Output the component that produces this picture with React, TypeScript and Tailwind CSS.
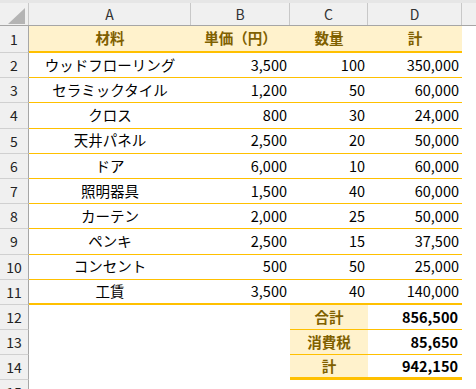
const rows = [
  { name: 'ウッドフローリング', price: '3,500', qty: '100', total: '350,000' },
  { name: 'セラミックタイル', price: '1,200', qty: '50', total: '60,000' },
  { name: 'クロス', price: '800', qty: '30', total: '24,000' },
  { name: '天井パネル', price: '2,500', qty: '20', total: '50,000' },
  { name: 'ドア', price: '6,000', qty: '10', total: '60,000' },
  { name: '照明器具', price: '1,500', qty: '40', total: '60,000' },
  { name: 'カーテン', price: '2,000', qty: '25', total: '50,000' },
  { name: 'ペンキ', price: '2,500', qty: '15', total: '37,500' },
  { name: 'コンセント', price: '500', qty: '50', total: '25,000' },
  { name: '工賃', price: '3,500', qty: '40', total: '140,000' },
];

const totals = [
  { label: '合計', value: '856,500' },
  { label: '消費税', value: '85,650' },
  { label: '計', value: '942,150' },
];

const grid = 'grid grid-cols-[29px_162px_99px_78px_94px_1fr]';
const rowHead =
  'flex items-center justify-center bg-[#f0f0f0] border-r border-r-[#a6a6a6] border-b border-b-[#d0d0d0] text-[14px] text-[#222]';

export default function App() {
  return (
    <div className="w-[476px] h-[389px] overflow-hidden bg-white font-['Noto_Sans_CJK_JP',sans-serif] text-[14.5px] text-black leading-none">
      {/* column headers */}
      <div className="h-[3px] bg-[#e6e6e6]" />
      <div className={`${grid} h-[23px] bg-[#f0f0f0] border-b border-b-[#a6a6a6] text-[14px] text-[#333]`}>
        <div className="relative border-r border-r-[#c8c8c8]">
          <div className="absolute left-[8px] top-[5px] w-0 h-0 border-l-[17px] border-l-transparent border-b-[16px] border-b-[#b4b4b4]" />
        </div>
        {['A', 'B', 'C', 'D'].map((c) => (
          <div key={c} className="flex items-center justify-center border-r border-r-[#c8c8c8]">
            {c}
          </div>
        ))}
        <div />
      </div>

      {/* row 1 */}
      <div className={`${grid} h-[27px]`}>
        <div className={rowHead}>1</div>
        <div className="col-span-4 grid grid-cols-[162px_99px_78px_94px] bg-[#fff2cc] border-b-2 border-b-[#ffc000] font-bold text-[#7f6000]">
          <div className="flex items-center justify-center">材料</div>
          <div className="flex items-center justify-center">単価（円）</div>
          <div className="flex items-center justify-center">数量</div>
          <div className="flex items-center justify-center">計</div>
        </div>
        <div />
      </div>

      {/* data rows */}
      {rows.map((r, i) => {
        const last = i === rows.length - 1;
        return (
          <div key={r.name} className={`${grid} ${last ? 'h-[25.3px]' : 'h-[25.2px]'}`}>
            <div className={rowHead}>{i + 2}</div>
            <div
              className={`col-span-4 grid grid-cols-[162px_99px_78px_94px] border-b-[#ffc000] ${
                last ? 'border-b-2' : 'border-b'
              }`}
            >
              <div className="flex items-center justify-center">{r.name}</div>
              <div className="flex items-center justify-end pr-[3px]">{r.price}</div>
              <div className="flex items-center justify-end pr-[3px]">{r.qty}</div>
              <div className="flex items-center justify-end pr-[3px]">{r.total}</div>
            </div>
            <div />
          </div>
        );
      })}

      {/* totals */}
      {totals.map((t, i) => {
        const last = i === totals.length - 1;
        return (
          <div key={t.label} className={`${grid} h-[25px]`}>
            <div className={rowHead}>{i + 12}</div>
            <div className="col-span-2" />
            <div
              className={`col-span-2 grid grid-cols-[78px_94px] border-b-[#ffc000] ${
                last ? 'border-b-[3px]' : 'border-b'
              }`}
            >
              <div className="flex items-center justify-center bg-[#fff2cc] font-bold text-[#7f6000]">{t.label}</div>
              <div className="flex items-center justify-end pr-[4px] font-bold">{t.value}</div>
            </div>
            <div />
          </div>
        );
      })}

      <div className={`${grid} h-[25px]`}>
        <div className={rowHead}>15</div>
      </div>
    </div>
  );
}
